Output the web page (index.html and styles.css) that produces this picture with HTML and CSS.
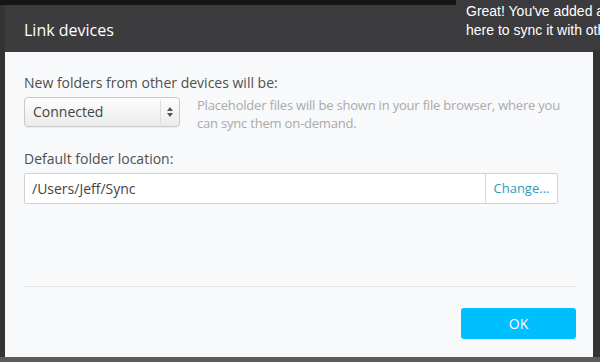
FILE: index.html
```html
<!DOCTYPE html>
<html lang="en">
<head>
  <meta charset="UTF-8" />
  <title>Link devices</title>
  <link rel="stylesheet" href="styles.css">
</head>
<body>
<div class="modal">
  <div class="modal-header">
    <h3 class="modal-title">Link devices</h3>
  </div>

  <div class="modal-body">
    <label class="field-label">New folders from other devices will be:</label>
    <div class="select-row">
      <div class="select">
        <span class="select-value">Connected</span>
        <span class="select-arrows">
          <svg width="8" height="12" viewBox="0 0 8 12"><path d="M4 1 L7 5 L1 5 Z M4 11 L7 7 L1 7 Z" fill="#555"/></svg>
        </span>
      </div>
      <p class="help">Placeholder files will be shown in your file browser, where you can sync them on-demand.</p>
    </div>

    <label class="field-label second">Default folder location:</label>
    <div class="path-group">
      <span class="path-input">/Users/Jeff/Sync</span>
      <span class="path-btn">Change...</span>
    </div>
  </div>

  <div class="modal-footer">
    <button class="btn-ok" type="button">OK</button>
  </div>
</div>

<!-- onboarding tip that sits over the window corner -->
<div class="tip">Great! You've added a folder. Click<br>here to sync it with other devices.</div>
</body>
</html>
```

FILE: styles.css
```css
:root { --header:#3c3c3e; --body:#f8f9fa; --accent:#00bfff; --link:#2b9cc2; }
*{box-sizing:border-box;margin:0;padding:0}
html,body{height:100%}
body{
  font-family:"Open Sans",Arial,sans-serif;
  background:linear-gradient(to bottom,#161616 0,#161616 5px,#333 5px,#333 calc(100% - 5px),#5a5a5a calc(100% - 5px));
  overflow:hidden;
  padding:5px 7px 0 5px;
}

.modal{height:352px;background:var(--body);display:flex;flex-direction:column}
.modal-header{height:47px;background:var(--header);display:flex;align-items:center;padding:2px 0 0 19px}
.modal-title{color:#fff;font-size:16px;font-weight:400}

.modal-body{padding:21px 17px 0 19px;display:flex;flex-direction:column}
.field-label{display:block;font-size:14px;line-height:20px;color:#4f4f4f;font-weight:400}
.field-label.second{margin-top:17px}

.select-row{display:flex;align-items:flex-start;gap:17px;margin-top:4px}
.select{
  width:156px;height:30px;flex:none;
  display:flex;align-items:stretch;
  border:1px solid #c9c9c9;border-radius:4px;
  background:linear-gradient(#fefefe,#ebebeb);
  box-shadow:0 1px 1px rgba(0,0,0,.06);
}
.select-value{flex:1;padding-left:8px;font-size:14px;line-height:28px;color:#444}
.select-arrows{width:19px;border-left:1px solid #ddd;display:flex;align-items:center;justify-content:center;margin:2px 0}
.help{flex:1;font-size:13px;line-height:18px;letter-spacing:-.2px;color:#aaa;margin-top:-1px}

.path-group{width:534px;height:31px;margin-top:4px;display:flex;background:#fff;border:1px solid #d2d2d2;border-radius:2px}
.path-input{flex:1;padding-left:7px;font-size:14px;line-height:29px;color:#444}
.path-btn{width:72px;border-left:1px solid #d8d8d8;text-align:center;font-size:13px;line-height:29px;color:var(--link)}

.modal-footer{margin:auto 17px 0 19px;border-top:1px solid #e6e6e6;padding:21px 0 18px;display:flex;justify-content:flex-end}
.btn-ok{width:115px;height:31px;background:var(--accent);border:0;border-radius:3px;color:#fff;font-family:inherit;font-size:14px;cursor:pointer}

.tip{
  position:absolute;top:0;left:456px;right:0;height:50px;
  background:#3b3b3d;color:#fff;
  font-family:"Liberation Sans",Arial,sans-serif;font-size:14px;line-height:19px;
  padding:2px 0 0 10px;white-space:nowrap;overflow:hidden;
}
```
